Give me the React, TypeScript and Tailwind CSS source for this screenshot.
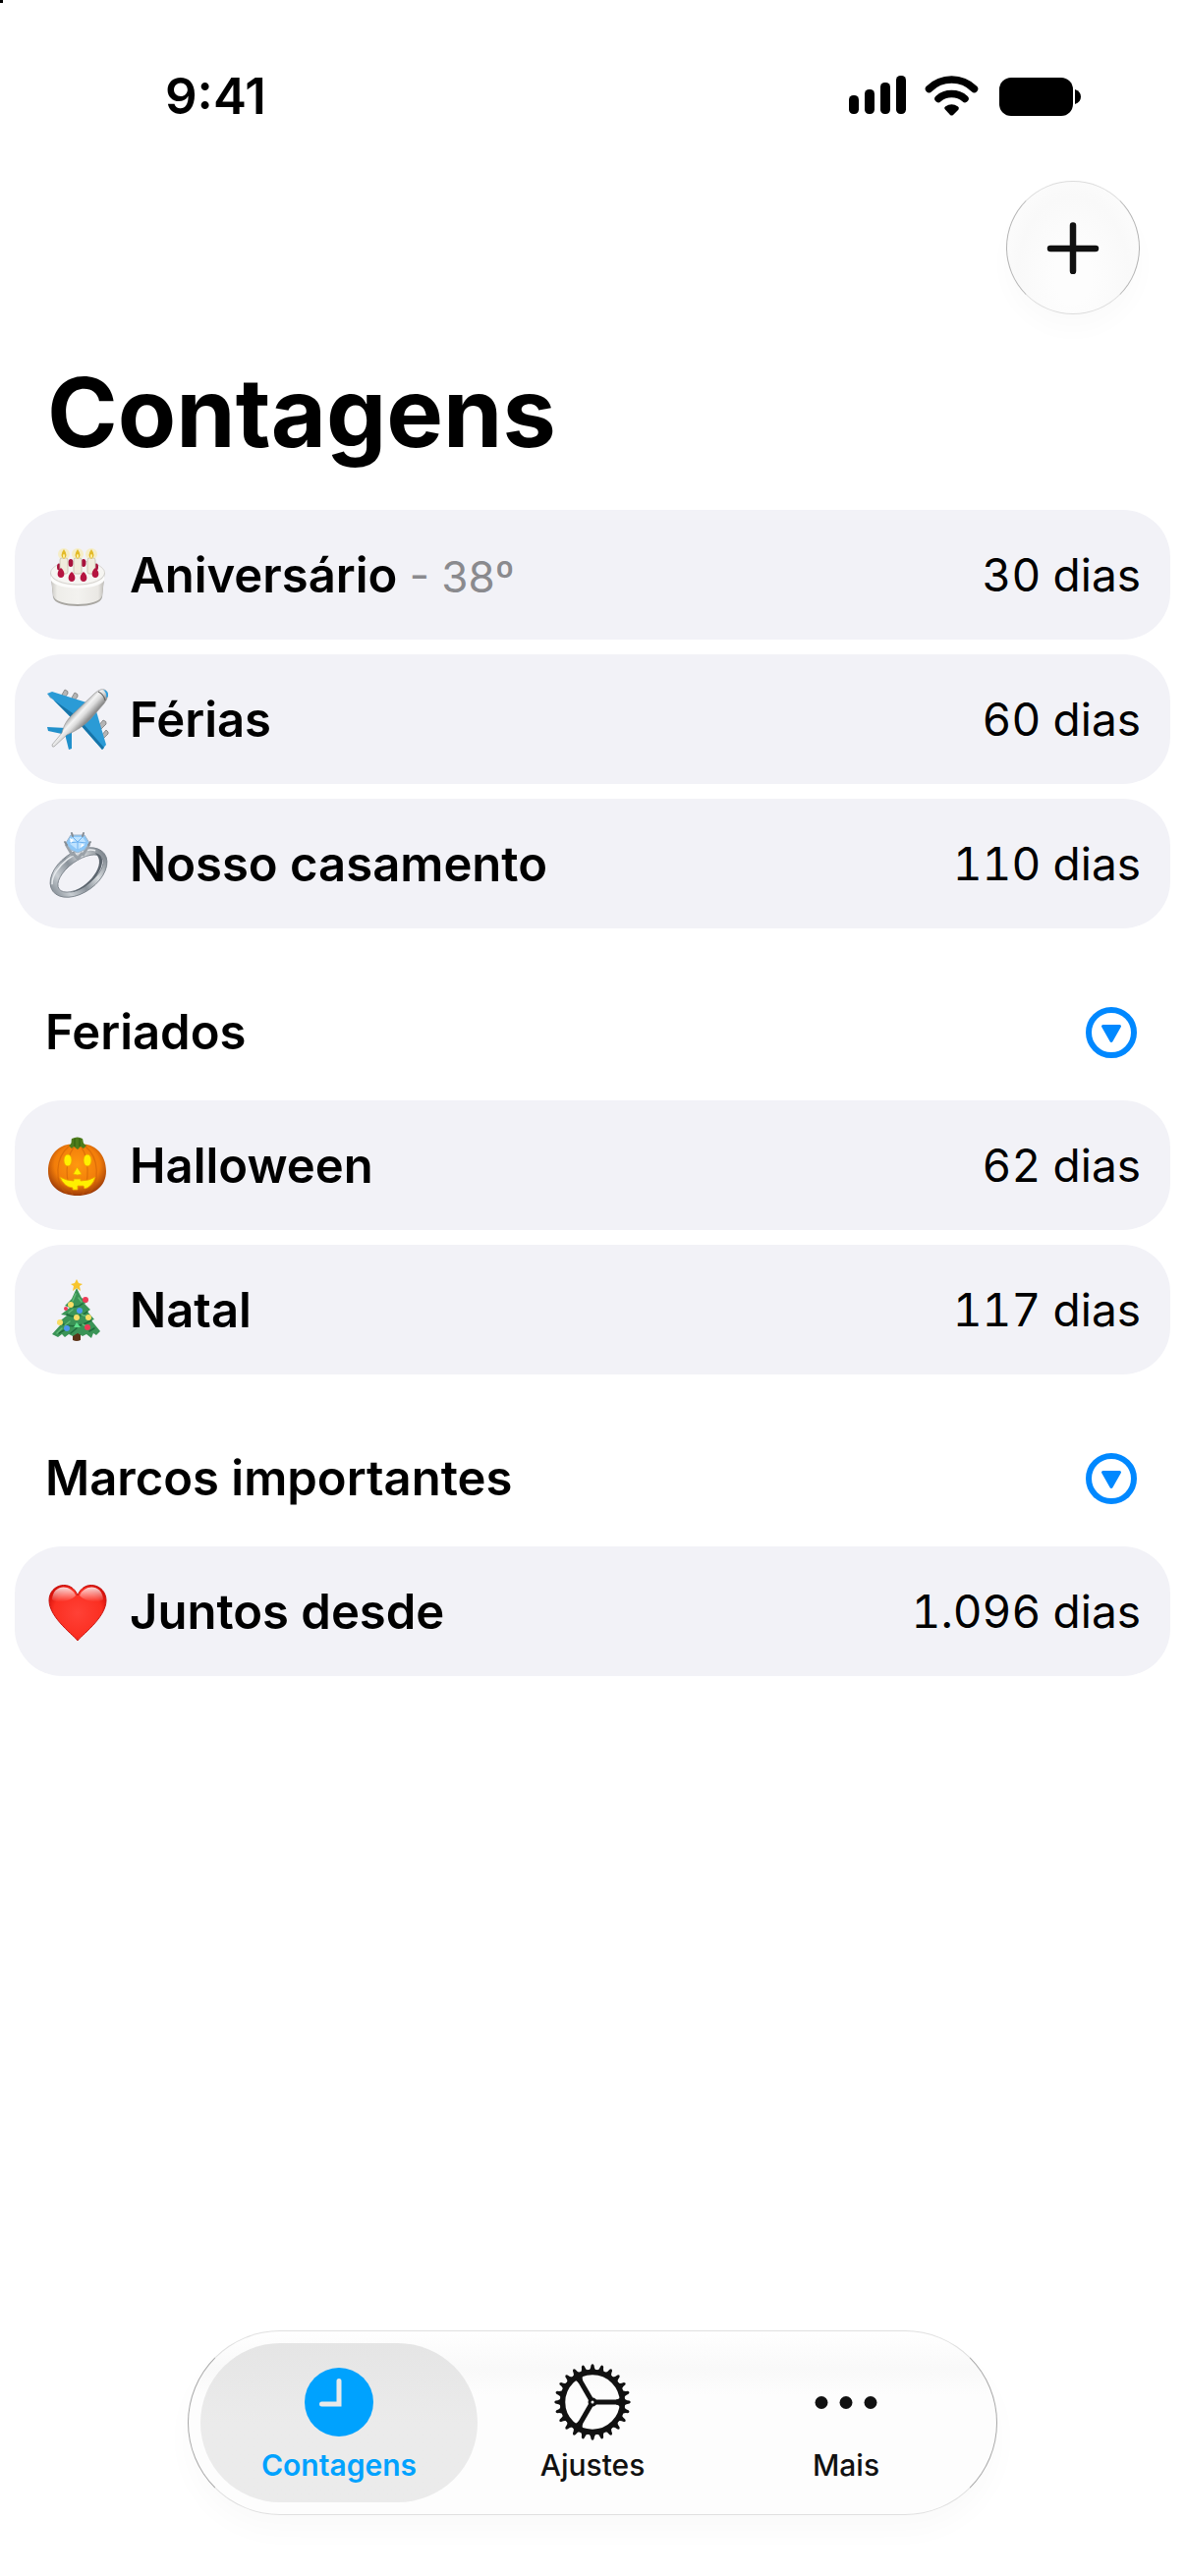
import type { ReactNode } from "react";

function CakeIcon() {
  return (
    <>
      <defs>
        <linearGradient id="cake-side" x1="0" x2="1" y1="0" y2="0">
          <stop offset="0" stopColor="#c4c2bd" />
          <stop offset="0.12" stopColor="#eeede9" />
          <stop offset="0.5" stopColor="#f3f2ef" />
          <stop offset="0.88" stopColor="#eae8e4" />
          <stop offset="1" stopColor="#b9b7b2" />
        </linearGradient>
      </defs>
      <path d="M5.5 34 L8 59 C10 71 56 71 58 59 L60.5 34 Z" fill="#a9a7a2" />
      <path d="M5.5 34 L8 57 C10 69 56 69 58 57 L60.5 34 Z" fill="url(#cake-side)" />
      <ellipse cx="33" cy="34" rx="27.5" ry="12" fill="#f6f5f2" stroke="#cfcdc8" strokeWidth="0.8" />
      <path d="M5.5 35 C8 51 58 51 60.5 35 L60 42 C54 52 12 52 6 42 Z" fill="#fcfcfb" />
      <g fill="#a8123c">
        <ellipse cx="26" cy="24" rx="2.5" ry="4" />
        <ellipse cx="39" cy="24" rx="2.5" ry="4" />
        <ellipse cx="14" cy="28" rx="2" ry="3.5" />
        <ellipse cx="52" cy="28" rx="2" ry="3.5" />
      </g>
      <g fill="#ffe34d" opacity="0.28">
        <circle cx="19" cy="15" r="6" />
        <circle cx="33" cy="15" r="6" />
        <circle cx="47" cy="15" r="6" />
      </g>
      <g fill="#f0ecdd" stroke="#c4bfab" strokeWidth="0.8">
        <rect x="15" y="19" width="8" height="16" rx="2" />
        <rect x="29" y="19" width="8" height="16" rx="2" />
        <rect x="43" y="19" width="8" height="16" rx="2" />
      </g>
      <g fill="#e3ba28">
        <path d="M19 10 Q24 17 19 20 Q14 17 19 10Z" />
        <path d="M33 10 Q38 17 33 20 Q28 17 33 10Z" />
        <path d="M47 10 Q52 17 47 20 Q42 17 47 10Z" />
      </g>
      <g fill="#fff2a6">
        <ellipse cx="19" cy="17" rx="1" ry="2" />
        <ellipse cx="33" cy="17" rx="1" ry="2" />
        <ellipse cx="47" cy="17" rx="1" ry="2" />
      </g>
      <g fill="#b5143f">
        <path d="M16 29 C21 33 20 39 16 39 C12 39 11 33 16 29Z" />
        <path d="M27 33 C32 37 31 43 27 43 C23 43 22 37 27 33Z" />
        <path d="M39 33 C44 37 43 43 39 43 C35 43 34 37 39 33Z" />
        <path d="M51 29 C56 33 55 39 51 39 C47 39 46 33 51 29Z" />
      </g>
    </>
  );
}

function PlaneIcon() {
  return (
    <>
      <defs>
        <linearGradient id="plane-body" gradientUnits="userSpaceOnUse" x1="35" x2="47" y1="22" y2="33">
          <stop offset="0" stopColor="#a3a3a3" />
          <stop offset="0.35" stopColor="#f4f4f4" />
          <stop offset="0.6" stopColor="#dcdcdc" />
          <stop offset="1" stopColor="#8a8a8a" />
        </linearGradient>
      </defs>
      <g fill="#b5b5b5" stroke="#7c7c7c" strokeWidth="0.8">
        <path d="M17 11 L20 6 Q24 7 23 10 L20 14Z" />
        <path d="M27 14 L30 9 Q34 10 33 13 L30 17Z" />
        <path d="M54 43 L59 37 Q63 38 62 41 L57 46Z" />
        <path d="M57 53 L62 47 Q65 49 64 51 L59 56Z" />
      </g>
      <path d="M2 10 L7 8 L42 19 L27 35 Z" fill="#2b9bd6" />
      <path d="M2 10 L5 14 L28 30 L27 35 Z" fill="#1774a8" />
      <path d="M36 42 L52 28 L62 62 L58 67 Z" fill="#2b9bd6" />
      <path d="M36 42 L39 41 L60 65 L58 67 Z" fill="#1774a8" />
      <path d="M2 44 L21 45 L17 51 L3 48 Z" fill="#2190cb" />
      <path d="M20 51 L27 47 L27 66 L24 67 Z" fill="#2190cb" />
      <path d="M7 62 L17 50 C19 42 22 37 27 32 L50 10 Q58 3 62 7 Q66 12 60 20 L46 36 C39 43 33 47 22 52 L9 64 Q7 65 7 62 Z" fill="url(#plane-body)" stroke="#8f8f8f" strokeWidth="0.6" />
      <path d="M59 6 Q65 7 64 13 L62 14 Q63 9 59 6Z" fill="#2b9fe0" />
      <path d="M54 8 Q60 11 61 17" fill="none" stroke="#666" strokeWidth="1.2" />
    </>
  );
}

function RingIcon() {
  return (
    <>
      <defs>
        <linearGradient id="ring-band" x1="0" x2="1" y1="0" y2="0">
          <stop offset="0" stopColor="#8b939b" />
          <stop offset="0.2" stopColor="#c9ced3" />
          <stop offset="0.45" stopColor="#8a929a" />
          <stop offset="0.7" stopColor="#d8dcdf" />
          <stop offset="1" stopColor="#7b838b" />
        </linearGradient>
      </defs>
      <g transform="rotate(-36 34 45)">
        <path
          fillRule="evenodd"
          fill="url(#ring-band)"
          stroke="#757d85"
          strokeWidth="0.8"
          d="M1.5 45 A32.500 20.500 0 1 1 66.500 45 A32.500 20.500 0 1 1 1.500 45 Z M8 47 A27 13 0 1 0 62 47 A27 13 0 1 0 8 47 Z"
        />
        <path d="M14 56 C25 64 52 62 61 49 C63 45 62 41 59 39 C64 55 32 64 14 56Z" fill="#5c656e" />
        <path d="M5 39 C14 25 50 23 61 37" fill="none" stroke="#e7eaed" strokeWidth="1.5" />
      </g>
      <path d="M21 16 L28 28 M45 16 L38 28 M28 25 L33 31 L38 25" fill="none" stroke="#9aa1a8" strokeWidth="3" />
      <path d="M26 7 L40 7 L45 15 L40 22 L33 25 L26 22 L21 15Z" fill="#8ec8f7" stroke="#9db4ca" strokeWidth="1" />
      <path d="M28 9 L38 9 L42 15 L33 22 L24 15Z" fill="#bfe3ff" />
      <path d="M28 9 L33 14 L38 9 M24 15 L33 14 L42 15 M33 14 L33 22" stroke="#6db1f0" strokeWidth="1" fill="none" />
      <path d="M25 10 L29 12 L26 15Z M37 16 L40 17 L36 20Z" fill="#ffffff" />
      <path d="M20 14 L22 17 M46 14 L44 17 M27 5 L28 8 M39 5 L38 8" stroke="#858c93" strokeWidth="2" strokeLinecap="round" />
    </>
  );
}

function PumpkinIcon() {
  return (
    <>
      <defs>
        <radialGradient id="pumpkin-body" cx="0.5" cy="0.4" r="0.6">
          <stop offset="0" stopColor="#ff980f" />
          <stop offset="0.65" stopColor="#f27d0a" />
          <stop offset="1" stopColor="#9c3a08" />
        </radialGradient>
      </defs>
      <path d="M33 16 C46 11 62 22 62 42 C62 58 49 67 33 67 C16 67 3 58 3 42 C3 22 19 11 33 16 Z" fill="url(#pumpkin-body)" />
      <g fill="none" stroke="#c75a07" strokeWidth="1.2" opacity="0.5">
        <path d="M24 17 C10 28 9 54 22 65" />
        <path d="M41 17 C55 28 56 54 44 65" />
        <path d="M29 18 C20 30 20 52 28 66" />
        <path d="M37 18 C45 30 45 52 38 66" />
      </g>
      <path d="M24 16 C28 14 26 11 27 9 Q33 6 38 9 C39 12 38 14 42 16 L39 19 L36 17 L33 20 L29 17 L27 19 Z" fill="#4d7c1b" />
      <path d="M30 9 L30 17 M35 9 L35 17" stroke="#315c0e" strokeWidth="1" />
      <g fill="#fff000" stroke="#eda300" strokeWidth="0.8">
        <ellipse cx="23" cy="31" rx="4" ry="6" />
        <ellipse cx="43" cy="31" rx="4" ry="6" />
        <path d="M32.5 38 L37 45 Q33 47 28.5 45 Z" />
        <path d="M15 48 Q22 52 29 52 L29 50 L36 50 L36 52 Q45 52 51 48 Q48 58 40 60 L39 57 L33 57 L33 61 L28 61 L28 59 Q19 58 15 48Z" />
      </g>
    </>
  );
}

function TreeIcon() {
  return (
    <>
      <path d="M28 58 h8 v9 q-4 2 -8 0z" fill="#5a3216" />
      <path d="M32 14 L37 24 L43 28 L40 30 L46 36 L43 38 L50 46 L47 47 L56 58 L52 62 L49 60 L47 65 L42 61 L38 63 L33 60 L28 63 L24 61 L20 64 L17 61 L13 64 L7 61 L16 51 L12 50 L22 42 L16 41 L25 34 L20 32 L27 25 Z" fill="#3b9457" />
      <g fill="none" stroke="#1f6c3c" strokeWidth="1.5" strokeLinecap="round">
        <path d="M26 32 Q32 35 38 30" />
        <path d="M22 41 Q33 46 43 38" />
        <path d="M18 51 Q32 56 47 47" />
        <path d="M14 60 L21 56 M45 58 L50 55 M26 60 L32 55" />
      </g>
      <g fill="none" stroke="#62ba78" strokeWidth="1.5" strokeLinecap="round">
        <path d="M31 20 L28 27 M34 24 L37 28 M28 36 L24 39 M37 41 L42 43 M25 48 L20 52 M38 51 L44 54 M12 60 L17 55" />
      </g>
      <path d="M32 5 L34 9 L38 10 L35 12 L36 17 L32 14 L28 17 L29 12 L26 10 L30 9Z" fill="#f7c52d" />
      <g fill="#ee3b57">
        <circle cx="41" cy="26" r="3" />
        <circle cx="21" cy="35" r="2" />
        <circle cx="43" cy="54" r="3" />
      </g>
      <g fill="#f9dd66">
        <circle cx="26" cy="31" r="3" />
        <circle cx="32" cy="44" r="3" />
        <circle cx="44" cy="44" r="3" />
        <circle cx="15" cy="49" r="3" />
      </g>
      <g fill="#4c97ee">
        <circle cx="35" cy="37" r="3" />
        <circle cx="22" cy="55" r="3" />
      </g>
      <path d="M32 49 L36 54 L29 54Z" fill="#5fe08b" />
    </>
  );
}

function HeartIcon() {
  return (
    <>
      <defs>
        <radialGradient id="heart-body" cx="0.5" cy="0.5" r="0.6">
          <stop offset="0" stopColor="#ff4136" />
          <stop offset="0.7" stopColor="#fb2f22" />
          <stop offset="1" stopColor="#d10b06" />
        </radialGradient>
        <linearGradient id="heart-shine" x1="0" x2="0" y1="0" y2="1">
          <stop offset="0" stopColor="#fff" stopOpacity="0.85" />
          <stop offset="1" stopColor="#fff" stopOpacity="0" />
        </linearGradient>
      </defs>
      <path d="M33 66 C31 62 4 43 4 25 C4 8 27 3 33 20 C39 3 62 8 62 25 C62 43 35 62 33 66 Z" fill="url(#heart-body)" stroke="#c81410" strokeWidth="1" />
      <path d="M7 24 C8 8 26 8 31 20 C27 25 12 29 7 24Z" fill="url(#heart-shine)" />
      <path d="M59 24 C58 8 40 8 35 20 C39 25 54 29 59 24Z" fill="url(#heart-shine)" />
    </>
  );
}

function ClockIcon() {
  return (
    <svg viewBox="0 0 80 80" className="size-20" aria-hidden="true">
      <circle cx="40" cy="40" r="35" fill="#00a2fe" />
      <path d="M40 18.5 V42 H22.5" fill="none" stroke="#e9e9e9" strokeWidth="5" strokeLinecap="round" />
    </svg>
  );
}

const teeth = Array.from({ length: 24 }, (_, i) => i * 15);

function GearIcon() {
  return (
    <svg viewBox="0 0 80 80" className="size-20" aria-hidden="true">
      <circle cx="40" cy="40" r="30.5" fill="none" stroke="#111" strokeWidth="5.5" />
      {teeth.map((angle) => (
        <path
          key={angle}
          d="M35.5 8 Q38 7 38.5 2.5 Q40 0 41.5 2.5 Q42 7 44.5 8 Z"
          fill="#111"
          transform={`rotate(${angle} 40 40)`}
        />
      ))}
      {[0, 120, 240].map((angle) => (
        <g key={angle} transform={`rotate(${angle} 40 40)`}>
          <path d="M43 40 H69" stroke="#111" strokeWidth="5" />
          <path d="M64 37.5 Q68 37 69 33 V47 Q68 43 64 42.5Z" fill="#111" />
        </g>
      ))}
      <circle cx="40" cy="40" r="3" fill="#fdfdfd" stroke="#111" strokeWidth="3" />
    </svg>
  );
}

function DotsIcon() {
  return (
    <svg viewBox="0 0 80 80" className="size-20" fill="#111" aria-hidden="true">
      <circle cx="15" cy="40.5" r="6.5" />
      <circle cx="40" cy="40.5" r="6.5" />
      <circle cx="65" cy="40.5" r="6.5" />
    </svg>
  );
}

function StatusBar() {
  return (
    <div className="flex h-[50px] items-center justify-between pr-[106px] pl-[168px]">
      <time className="text-[51px] leading-[50px] font-semibold">9:41</time>
      <svg viewBox="0 0 236 42" className="h-[42px] w-[236px]" aria-hidden="true">
        <rect x="0" y="20" width="10" height="19" rx="4.5" />
        <rect x="16" y="14" width="10" height="25" rx="4.5" />
        <rect x="32" y="7" width="10" height="32" rx="4.5" />
        <rect x="48" y="0" width="10" height="39" rx="4.5" />
        <g fill="none" stroke="#000" strokeWidth="7.5" strokeLinecap="round">
          <path d="M81.5 13.5 Q91 4 104.5 4 Q118 4 127.5 13.5" />
          <path d="M91 23.5 Q96.5 18.5 104.5 18.5 Q112.5 18.5 118 23.5" />
        </g>
        <path d="M97.5 34 Q96.5 32.5 98 31.5 Q104.5 27 111 31.5 Q112.5 32.5 111.5 34.5 L106 40 Q104.5 41 103 40 Z" />
        <rect x="153" y="2" width="75" height="39" rx="12" />
        <path d="M230 14 Q236 16 236 21.5 Q236 27 230 29 Z" />
      </svg>
    </div>
  );
}

type Countdown = {
  icon: ReactNode;
  name: string;
  note?: string;
  days: string;
};

const groups: { title?: string; items: Countdown[] }[] = [
  {
    items: [
      { icon: <CakeIcon />, name: "Aniversário", note: "- 38º", days: "30 dias" },
      { icon: <PlaneIcon />, name: "Férias", days: "60 dias" },
      { icon: <RingIcon />, name: "Nosso casamento", days: "110 dias" },
    ],
  },
  {
    title: "Feriados",
    items: [
      { icon: <PumpkinIcon />, name: "Halloween", days: "62 dias" },
      { icon: <TreeIcon />, name: "Natal", days: "117 dias" },
    ],
  },
  {
    title: "Marcos importantes",
    items: [{ icon: <HeartIcon />, name: "Juntos desde", days: "1.096 dias" }],
  },
];

const tabs = [
  { label: "Contagens", icon: <ClockIcon />, active: true },
  { label: "Ajustes", icon: <GearIcon />, active: false },
  { label: "Mais", icon: <DotsIcon />, active: false },
];

function CountdownRow({ item }: { item: Countdown }) {
  return (
    <li className="flex h-[132px] items-center rounded-[48px] bg-[#f2f2f7] pr-[30px] pl-[31px]">
      <svg viewBox="0 0 66 72" className="h-[72px] w-[66px] shrink-0" aria-hidden="true">
        {item.icon}
      </svg>
      <p className="ml-5 flex-1 pt-0.5 text-[49px] leading-[60px] font-semibold">
        {item.name}
        {item.note && (
          <span className="text-[44px] font-normal text-[#8a8a8e]"> {item.note}</span>
        )}
      </p>
      <span className="text-[46px] leading-[60px] tabular-nums">{item.days}</span>
    </li>
  );
}

function GroupHeader({ title }: { title: string }) {
  return (
    <div className="flex items-center justify-between pt-20 pr-[34px] pb-[43px] pl-[31px]">
      <h2 className="text-[49px] leading-[52px] font-semibold">{title}</h2>
      <button type="button" aria-label={`Recolher ${title}`} className="size-[52px]">
        <svg viewBox="0 0 52 52" className="size-full" aria-hidden="true">
          <circle cx="26" cy="26" r="23" fill="none" stroke="#0088ff" strokeWidth="6" />
          <path d="M17.5 19.5 H34.5 L26 34.5 Z" fill="#0088ff" stroke="#0088ff" strokeWidth="3" strokeLinejoin="round" />
        </svg>
      </button>
    </div>
  );
}

export default function App() {
  return (
    <div className="relative flex min-h-screen flex-col bg-white pt-[73px] font-['Inter','Liberation_Sans',sans-serif] text-black">
      <span className="absolute top-0 left-0 size-[3px] bg-black" />
      <StatusBar />

      <header className="pr-[46px] pl-12">
        <div className="mt-[61px] flex justify-end">
          <button
            type="button"
            aria-label="Adicionar"
            className="flex size-[136px] items-center justify-center rounded-full border border-[#b4b4b4] border-y-[#dcdcdc] bg-radial-[at_50%_72%] from-[#fdfdfd] from-20% via-[#f9f9f9] via-60% to-white shadow-[0_16px_24px_rgba(0,0,0,0.02)]"
          >
            <svg viewBox="0 0 54 54" className="size-[54px]" aria-hidden="true">
              <path d="M27 4.5 V51 M4 28 H50" stroke="#111" strokeWidth="6.5" strokeLinecap="round" />
            </svg>
          </button>
        </div>
        <h1 className="mt-10 text-[97px] leading-[120px] font-bold">Contagens</h1>
      </header>

      <main className="mt-[39px] px-[15px]">
        {groups.map((group, i) => (
          <section key={i}>
            {group.title && <GroupHeader title={group.title} />}
            <ul className="flex flex-col gap-[15px]">
              {group.items.map((item) => (
                <CountdownRow key={item.name} item={item} />
              ))}
            </ul>
          </section>
        ))}
      </main>

      <nav
        aria-label="Principal"
        className="mx-auto mt-auto mb-[62px] flex -space-x-6 rounded-full border border-[#a8a8a8] border-y-[#e0e0e0] bg-linear-to-b from-white via-[#f9f9f9] via-20% to-[#fdfdfd] to-35% p-3 shadow-[0_16px_30px_rgba(0,0,0,0.025)]"
      >
        {tabs.map((tab) => (
          <button
            key={tab.label}
            type="button"
            aria-current={tab.active ? "page" : undefined}
            className={
              tab.active
                ? "flex h-[162px] w-[282px] flex-col items-center rounded-full bg-linear-to-b from-[#e5e5e5] to-[#ebebeb] to-50% pt-5 text-[#00a2fe]"
                : "flex h-[162px] w-[282px] flex-col items-center rounded-full pt-5 text-[#111]"
            }
          >
            {tab.icon}
            <span className={tab.active ? "mt-1 text-[30px] leading-[40px] font-semibold" : "mt-1 text-[30px] leading-[40px] font-medium"}>
              {tab.label}
            </span>
          </button>
        ))}
      </nav>
    </div>
  );
}
